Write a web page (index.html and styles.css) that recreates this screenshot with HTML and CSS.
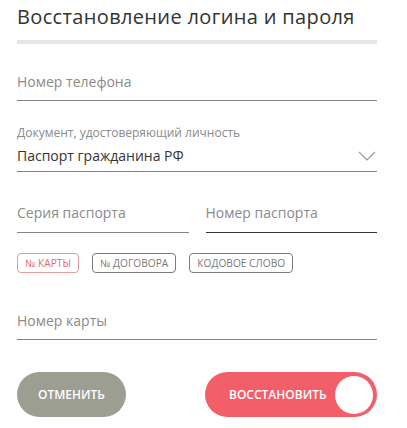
FILE: index.html
```html
<!DOCTYPE html>
<html lang="ru">
<head>
<meta charset="utf-8">
<link rel="stylesheet" href="styles.css">
</head>
<body>
<div class="page">
  <h1 class="title">Восстановление логина и пароля</h1>
  <div class="divider"></div>

  <div class="field field-phone">
    <span class="placeholder">Номер телефона</span>
  </div>

  <div class="field field-doc">
    <span class="label">Документ, удостоверяющий личность</span>
    <div class="select-row">
      <span class="value">Паспорт гражданина РФ</span>
      <svg class="chevron" width="18" height="10" viewBox="0 0 18 10"><path d="M1 1 L9 9 L17 1" fill="none" stroke="#9a9a9a" stroke-width="1.2"/></svg>
    </div>
  </div>

  <div class="row">
    <div class="field field-half">
      <span class="placeholder">Серия паспорта</span>
    </div>
    <div class="field field-half field-active">
      <span class="placeholder">Номер паспорта</span>
    </div>
  </div>

  <div class="chips">
    <span class="chip chip-active">№ карты</span>
    <span class="chip">№ договора</span>
    <span class="chip">Кодовое слово</span>
  </div>

  <div class="field field-card">
    <span class="placeholder">Номер карты</span>
  </div>

  <div class="actions">
    <button class="btn btn-cancel">Отменить</button>
    <button class="btn btn-restore"><span class="btn-text">Восстановить</span><span class="knob"></span></button>
  </div>
</div>
</body>
</html>
```
FILE: styles.css
```css
* { box-sizing: border-box; }
html, body { margin: 0; padding: 0; background: #fff; }
body { font-family: "Open Sans", "Noto Sans", sans-serif; }
.page { width: 394px; padding: 0 17px; }
.title {
  margin: 0; padding-top: 4px;
  font-size: 20px; line-height: 26px; font-weight: 400;
  color: #333330; letter-spacing: 0.35px;
}
.divider { margin-top: 10px; height: 4px; background: #e6e6e1; }
.field { border-bottom: 1px solid #858585; }
.placeholder { display: block; font-size: 14px; line-height: 20px; color: #8a8a8a; }
.field-phone { margin-top: 28px; padding-bottom: 8px; }
.field-doc { margin-top: 25px; padding-bottom: 5px; }
.label { display: block; font-size: 12px; line-height: 14px; color: #8a8a8a; }
.select-row { margin-top: 6px; display: flex; align-items: center; justify-content: space-between; }
.value { font-size: 14px; line-height: 20px; color: #333; }
.chevron { margin-right: 1px; }
.row { display: flex; gap: 17px; margin-top: 31px; }
.field-half { flex: 1; padding-bottom: 9px; }
.field-active { border-bottom-color: #333; }
.chips { display: flex; gap: 13px; margin-top: 20px; }
.chip {
  height: 20px; padding: 0 7px; border: 1px solid #7c7c7c; border-radius: 4px;
  font-size: 10.2px; line-height: 18px; text-transform: uppercase; color: #7a7a7a;
}
.chip-active { border-color: #e29b9b; color: #e46a66; }
.field-card { margin-top: 38px; padding-bottom: 8px; }
.actions { display: flex; justify-content: space-between; margin-top: 32px; }
.btn {
  height: 45px; border: 0; border-radius: 23px; color: #fff;
  font-family: inherit; font-size: 12px; font-weight: 600; text-transform: uppercase;
  padding: 0; cursor: pointer;
}
.btn-cancel { width: 109px; background: #9c9e91; }
.btn-restore {
  width: 172px; background: #f25f68; display: flex; align-items: center;
  padding: 0 4px 0 24px; gap: 6px;
}
.btn-text { flex: 1; text-align: left; }
.knob { width: 38px; height: 38px; border-radius: 50%; background: #fff; }
```
